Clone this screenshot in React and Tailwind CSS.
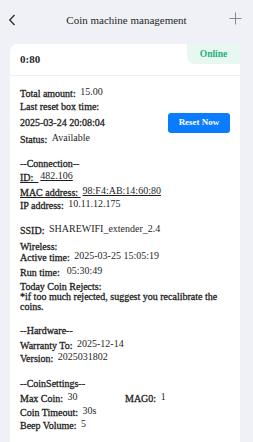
import React from "react";

const Row = ({ label, value, className = "", underline = false }) => (
  <div className={`flex items-start leading-[12px] ${underline ? "underline" : ""} ${className}`}>
    <span className="[-webkit-text-stroke:0.3px_#1f1f1f]">{label}</span>
    {value !== undefined && <span className="-mt-[2px] ml-[2px]">{value}</span>}
  </div>
);

const App = () => {
  return (
    <div
      className="min-h-[442px] w-[253px] bg-[#f0f1f6] text-[#1f1f1f] overflow-hidden"
      style={{ fontFamily: '"Liberation Serif", serif' }}
    >
      {/* top bar */}
      <div className="relative flex h-[40px] items-center justify-center">
        <svg className="absolute left-[8px] top-[14px]" width="9" height="12" viewBox="0 0 9 12">
          <path d="M6.5 1 L1.8 6 L6.5 11" fill="none" stroke="#333" strokeWidth="1.4" />
        </svg>
        <span className="text-[11px]">Coin machine management</span>
        <svg className="absolute left-[229px] top-[12px]" width="13" height="13" viewBox="0 0 13 13">
          <path d="M6.5 0.5 V12.5 M0.5 6.5 H12.5" stroke="#888" strokeWidth="1" />
        </svg>
      </div>

      {/* card */}
      <div className="ml-[10px] mt-[4px] w-[230px] rounded-t-lg bg-white pb-[20px]">
        <div className="relative flex h-[32px] items-center border-b border-[#eeeeee] px-[10px]">
          <span className="text-[11px] font-bold">0:80</span>
          <div className="absolute right-0 top-0 flex h-[20px] w-[53px] items-center justify-center rounded-tr-lg rounded-bl-lg bg-[#e7f8f1] text-[9.5px] font-bold text-[#1fb07a]">
            Online
          </div>
        </div>

        <div className="px-[10px] pt-[12px] text-[10px]">
          <div className="flex items-start">
            <div className="flex-1">
              <Row label={"Total amount:\u00a0"} value="15.00" />
              <Row label="Last reset box time:" className="mt-[1px]" />
              <Row label="2025-03-24 20:08:04" className="mt-[4px]" />
              <Row label={"Status:\u00a0"} value="Available" className="mt-[5px]" />
            </div>
            <button className="mt-[25px] h-[20px] w-[62px] rounded-[3px] bg-[#0a7cff] text-[9px] font-bold text-white">
              Reset Now
            </button>
          </div>

          <Row label="--Connection--" className="mt-[12px]" />
          <Row label={"ID:\u00a0\u00a0"} value="482.106" underline className="mt-[2px]" />
          <Row label={"MAC address:\u00a0"} value="98:F4:AB:14:60:80" underline className="mt-[3px]" />
          <Row label={"IP address:\u00a0"} value="10.11.12.175" className="mt-[1px]" />

          <Row label={"SSID:\u00a0"} value="SHAREWIFI_extender_2.4" className="mt-[13px]" />
          <Row label="Wireless:" className="mt-[4px]" />
          <Row label={"Active time:\u00a0"} value="2025-03-25 15:05:19" className="mt-[-1px]" />
          <Row label={"Run time:\u00a0\u00a0"} value="05:30:49" className="mt-[3px]" />
          <Row label="Today Coin Rejects:" className="mt-[2px]" />
          <div className="mt-[-1px] leading-[10px] [-webkit-text-stroke:0.3px_#1f1f1f]">
            *if too much rejected, suggest you recalibrate the coins.
          </div>

          <Row label="--Hardware--" className="mt-[13px]" />
          <Row label={"Warranty To:\u00a0"} value="2025-12-14" className="mt-[3px]" />
          <Row label={"Version:\u00a0"} value="2025031802" className="mt-[1px]" />

          <Row label="--CoinSettings--" className="mt-[13px]" />
          <div className="mt-[3px] flex">
            <Row label={"Max Coin:\u00a0"} value="30" className="w-[105px]" />
            <Row label={"MAG0:\u00a0"} value="1" />
          </div>
          <Row label={"Coin Timeout:\u00a0"} value="30s" className="mt-[2px]" />
          <Row label={"Beep Volume:\u00a0"} value="5" className="mt-[1px]" />
        </div>
      </div>
    </div>
  );
};

export default App;
